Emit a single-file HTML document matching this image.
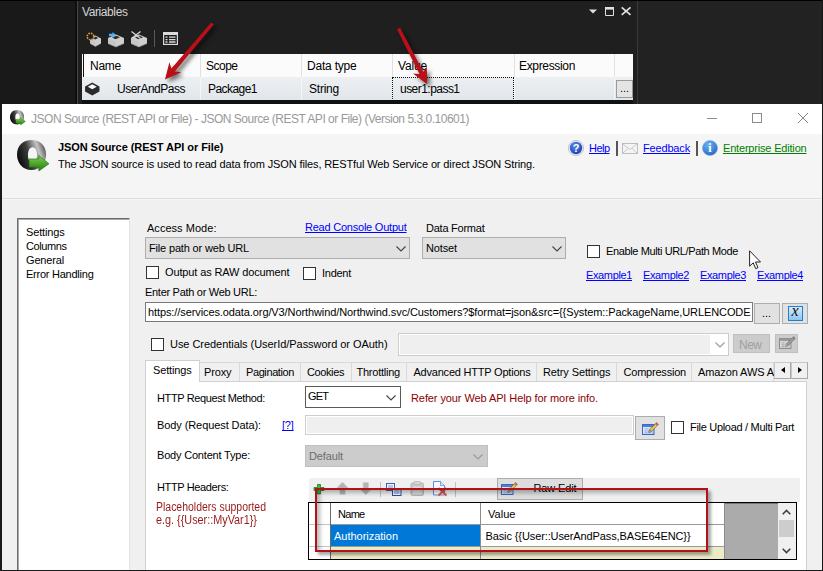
<!DOCTYPE html>
<html><head><meta charset="utf-8"><title>JSON Source</title>
<style>
*{box-sizing:border-box;margin:0;padding:0}
html,body{width:823px;height:571px;overflow:hidden;background:#161616}
body{position:relative;font-family:"Liberation Sans",sans-serif;font-size:11px;color:#000}
.a{position:absolute;white-space:nowrap}
.t{position:absolute;white-space:nowrap;line-height:14px;height:14px}
.lk{color:#0000ff;text-decoration:underline;text-decoration-skip-ink:none}
.cb{position:absolute;width:13px;height:13px;border:1px solid #333;background:#fff}
svg{position:absolute;overflow:visible}
</style></head><body>
<div class="a" style="left:0px;top:0px;width:77px;height:104px;background:#191919"></div>
<div class="a" style="left:75px;top:0px;width:2px;height:104px;background:#0e0e0e"></div>
<div class="a" style="left:77px;top:0px;width:1px;height:104px;background:#454545"></div>
<div class="a" style="left:78px;top:0px;width:560px;height:104px;background:#1f1f20"></div>
<div class="a" style="left:637px;top:0px;width:1px;height:104px;background:#3a3a3c"></div>
<div class="a" style="left:638px;top:0px;width:185px;height:104px;background:#222223"></div>
<div class="a" style="left:0px;top:0px;width:823px;height:1px;background:#000000"></div>
<div class="t" style="left:82px;top:5px;font-size:12px;color:#d4d4d4;letter-spacing:-0.405px">Variables</div>
<svg style="left:588px;top:5px" width="46" height="14" viewBox="588 5 46 14"><path d="M589 9.500h8l-4 4z" fill="#e0e0e0"/><path d="M605.500 7.500h8v8h-8z" fill="none" stroke="#e0e0e0" stroke-width="1"/><rect x="605" y="7" width="9" height="2.600" fill="#e0e0e0"/><path d="M621.700 7.300l8.800 7.600M630.500 7.300l-8.800 7.600" stroke="#e4e4e4" stroke-width="1.600" fill="none"/></svg>
<svg style="left:89.5px;top:34.5px" width="11" height="11.5" viewBox="0 0 16 13" preserveAspectRatio="none"><path d="M0 4L8 .5l8 3.500v5.500L8 13 0 9.500z" fill="#cfcfcf"/><path d="M0 4l8 3.500v5.500L0 9.500z" fill="#c6c6c6"/><path d="M4 3.600L8.500 1.800l3.500 1.500L7.500 5.200z" fill="#2c2c2c"/><path d="M.4 9.700L8 13l7.600-3.300" fill="none" stroke="#8c8c8c" stroke-width=".9" stroke-dasharray="1.500 1"/></svg><svg style="left:85.500px;top:31.500px" width="9" height="9" viewBox="0 0 9 9"><circle cx="4.500" cy="4.500" r="3.300" fill="#1f1f20" stroke="#eaa540" stroke-width="1.500" stroke-dasharray="1.500 1.100"/></svg>
<svg style="left:108px;top:33.5px" width="16" height="13" viewBox="0 0 16 13" preserveAspectRatio="none"><path d="M0 4L8 .5l8 3.500v5.500L8 13 0 9.500z" fill="#cfcfcf"/><path d="M0 4l8 3.500v5.500L0 9.500z" fill="#c6c6c6"/><path d="M4 3.600L8.500 1.800l3.500 1.500L7.500 5.200z" fill="#2c2c2c"/><path d="M.4 9.700L8 13l7.600-3.300" fill="none" stroke="#8c8c8c" stroke-width=".9" stroke-dasharray="1.500 1"/></svg><svg style="left:109px;top:32px" width="7" height="6" viewBox="0 0 7 6"><path d="M0 1.800h3.500V0L7 3 3.500 6V4.200H0z" fill="#4fb2f7"/></svg>
<svg style="left:131px;top:33.5px" width="16" height="13" viewBox="0 0 16 13" preserveAspectRatio="none"><path d="M0 4L8 .5l8 3.500v5.500L8 13 0 9.500z" fill="#cfcfcf"/><path d="M0 4l8 3.500v5.500L0 9.500z" fill="#c6c6c6"/><path d="M4 3.600L8.500 1.800l3.500 1.500L7.500 5.200z" fill="#2c2c2c"/><path d="M.4 9.700L8 13l7.600-3.300" fill="none" stroke="#8c8c8c" stroke-width=".9" stroke-dasharray="1.500 1"/></svg><svg style="left:131px;top:31px" width="10" height="8" viewBox="0 0 10 8"><path d="M.5.500l9 7M9.500.500l-9 7" stroke="#d4d4d4" stroke-width="1.250" fill="none"/></svg>
<div class="a" style="left:154px;top:30px;width:1px;height:17px;background:#5a5a5e"></div>
<svg style="left:163px;top:32px" width="15" height="13" viewBox="0 0 15 13"><rect x="0.6" y="0.6" width="13.8" height="11.8" fill="#1f1f20" stroke="#dadada" stroke-width="1.2"/><rect x="0.6" y="0.6" width="13.8" height="2.4" fill="#dadada"/><path d="M2.5 5.2h2M6 5.2h6.5M2.5 7.6h2M6 7.6h6.5M2.5 10h2M6 10h6.5" stroke="#dadada" stroke-width="1.3"/></svg>
<div class="a" style="left:82px;top:54px;width:551px;height:23px;background:#fbfbfb"></div>
<div class="a" style="left:82px;top:77px;width:551px;height:23px;background:linear-gradient(#edf0f3,#e1e6ea)"></div>
<div class="a" style="left:83px;top:54px;width:1px;height:23px;background:#111"></div>
<div class="a" style="left:82px;top:100px;width:551px;height:4px;background:#111111"></div>
<div class="a" style="left:200px;top:54px;width:1px;height:23px;background:#e0e0e0"></div>
<div class="a" style="left:200px;top:77px;width:1px;height:23px;background:#f4f6f8"></div>
<div class="a" style="left:301px;top:54px;width:1px;height:23px;background:#e0e0e0"></div>
<div class="a" style="left:301px;top:77px;width:1px;height:23px;background:#f4f6f8"></div>
<div class="a" style="left:392px;top:54px;width:1px;height:23px;background:#e0e0e0"></div>
<div class="a" style="left:392px;top:77px;width:1px;height:23px;background:#f4f6f8"></div>
<div class="a" style="left:514px;top:54px;width:1px;height:23px;background:#e0e0e0"></div>
<div class="a" style="left:514px;top:77px;width:1px;height:23px;background:#f4f6f8"></div>
<div class="a" style="left:614px;top:54px;width:1px;height:23px;background:#e0e0e0"></div>
<div class="a" style="left:614px;top:77px;width:1px;height:23px;background:#f4f6f8"></div>
<div class="t" style="left:90px;top:59px;font-size:12px;color:#000000;letter-spacing:-0.254px">Name</div>
<div class="t" style="left:206px;top:59px;font-size:12px;color:#000000;letter-spacing:-0.506px">Scope</div>
<div class="t" style="left:307px;top:59px;font-size:12px;color:#000000;letter-spacing:-0.208px">Data type</div>
<div class="t" style="left:398px;top:59px;font-size:12px;color:#000000;letter-spacing:-0.163px">Value</div>
<div class="t" style="left:519px;top:59px;font-size:12px;color:#000000;letter-spacing:-0.338px">Expression</div>
<div class="t" style="left:117px;top:82px;font-size:12px;color:#000000;letter-spacing:-0.489px">UserAndPass</div>
<div class="t" style="left:208px;top:82px;font-size:12px;color:#000000;letter-spacing:-0.547px">Package1</div>
<div class="t" style="left:309px;top:82px;font-size:12px;color:#000000;letter-spacing:-0.227px">String</div>
<div class="t" style="left:400px;top:82px;font-size:12px;color:#000000;letter-spacing:-0.534px">user1:pass1</div>
<svg style="left:85px;top:82px" width="14.500" height="13.500" viewBox="0 0 16 15"><path d="M0 5L8 0.5 16 5v5.5L8 15 0 10.5z" fill="#2b2b2b"/><path d="M3 5.2L8 2.6l5 2.6L8 8z" fill="#fafafa"/></svg>
<div class="a" style="left:392px;top:77px;width:122px;height:24px;border:1px dotted #111"></div>
<div class="a" style="left:616px;top:80px;width:17px;height:18px;background:#e4e4e4;border:1px solid #9a9a9a"></div>
<div class="t" style="left:620px;top:81px;color:#000">...</div>
<svg style="left:0;top:0;filter:drop-shadow(3px 3px 2px rgba(0,0,0,.55))" width="823" height="110" viewBox="0 0 823 110"><path d="M211.2 22.4 L171.4 68.5 L169.4 62.3 L165.0 79.5 L181.3 72.3 L174.8 71.4 L213.8 24.6Z" fill="#b90f16"/><path d="M396.9 29.3 L419.5 74.1 L412.9 73.5 L427.2 84.2 L426.8 66.4 L423.4 72.1 L400.1 27.7Z" fill="#b90f16"/></svg>
<div class="a" style="left:2px;top:104px;width:820px;height:30px;background:#ffffff"></div>
<div class="a" style="left:2px;top:134px;width:820px;height:436px;background:#f0f0f0"></div>
<div class="t" style="left:31px;top:112px;font-size:12px;color:#999999;letter-spacing:-0.483px">JSON Source (REST API or File) - JSON Source (REST API or File) (Version 5.3.0.10601)</div>
<svg style="left:700px;top:108px" width="115" height="22" viewBox="700 108 115 22"><path d="M707 118.500h10" stroke="#8a8a8a" stroke-width="1"/><rect x="752.5" y="113.5" width="9" height="9" fill="none" stroke="#8a8a8a" stroke-width="1"/><path d="M798 113l10 10M808 113l-10 10" stroke="#8a8a8a" stroke-width="1" fill="none"/></svg>
<svg style="left:10px;top:110px" width="16.0" height="15.5" viewBox="0 0 34 33"><defs><linearGradient id="rg10" x1="0" y1=".6" x2="1" y2=".25"><stop offset="0" stop-color="#0a0a0a"/><stop offset=".4" stop-color="#3c3c3c"/><stop offset=".74" stop-color="#c4c4c4"/><stop offset="1" stop-color="#4a4a4a"/></linearGradient><linearGradient id="gg10" x1="0" y1="0" x2="0" y2="1"><stop offset="0" stop-color="#7fd24a"/><stop offset="1" stop-color="#1f7d12"/></linearGradient></defs><path fill-rule="evenodd" fill="url(#rg10)" d="M15 0C24 0 30 6 30 15S24 31 15 31 0 24 0 15 6 0 15 0zM16 7.500c-3 0-4.700 3.700-4.700 8S13 23.500 16 23.500s4.700-3.700 4.700-8S19 7.500 16 7.500z"/><path fill="url(#gg10)" stroke="#1c6b10" stroke-width=".6" d="M12.500 19.500h10V16l10.500 8.500L22.500 32v-4h-10z"/></svg>
<div class="a" style="left:2px;top:134px;width:820px;height:64px;background:#f5f5f5"></div>
<div class="a" style="left:2px;top:198px;width:820px;height:1px;background:#dcdcdc"></div>
<div class="a" style="left:2px;top:199px;width:820px;height:1px;background:#f7f7f7"></div>
<svg style="left:16.5px;top:139.5px" width="33.0" height="32.0" viewBox="0 0 34 33"><defs><linearGradient id="rg16" x1="0" y1=".6" x2="1" y2=".25"><stop offset="0" stop-color="#0a0a0a"/><stop offset=".4" stop-color="#3c3c3c"/><stop offset=".74" stop-color="#c4c4c4"/><stop offset="1" stop-color="#4a4a4a"/></linearGradient><linearGradient id="gg16" x1="0" y1="0" x2="0" y2="1"><stop offset="0" stop-color="#7fd24a"/><stop offset="1" stop-color="#1f7d12"/></linearGradient></defs><path fill-rule="evenodd" fill="url(#rg16)" d="M15 0C24 0 30 6 30 15S24 31 15 31 0 24 0 15 6 0 15 0zM16 7.500c-3 0-4.700 3.700-4.700 8S13 23.500 16 23.500s4.700-3.700 4.700-8S19 7.500 16 7.500z"/><path fill="url(#gg16)" stroke="#1c6b10" stroke-width=".6" d="M12.500 19.500h10V16l10.500 8.500L22.500 32v-4h-10z"/></svg>
<div class="t" style="left:58px;top:140px;font-weight:bold;letter-spacing:-0.053px">JSON Source (REST API or File)</div>
<div class="t" style="left:58px;top:157px;letter-spacing:-0.130px">The JSON source is used to read data from JSON files, RESTful Web Service or direct JSON String.</div>
<svg style="left:568px;top:140px" width="16" height="16" viewBox="0 0 16 16"><defs><radialGradient id="hb" cx=".4" cy=".3" r=".8"><stop offset="0" stop-color="#5b8be8"/><stop offset="1" stop-color="#1b38a0"/></radialGradient></defs><circle cx="8" cy="8" r="7.6" fill="#e9eef8" stroke="#9aa6c8" stroke-width=".6"/><circle cx="8" cy="8" r="6.2" fill="url(#hb)"/><text x="8" y="12" font-family="Liberation Sans,sans-serif" font-size="11" font-weight="bold" fill="#fff" text-anchor="middle">?</text></svg>
<div class="t lk" style="left:589px;top:141px;letter-spacing:-0.531px">Help</div>
<div class="a" style="left:616px;top:141px;width:2px;height:15px;background:#555"></div>
<svg style="left:622px;top:143px" width="16" height="11" viewBox="0 0 16 11"><rect x=".5" y=".5" width="15" height="10" fill="#f4f4f4" stroke="#bdbdbd"/><path d="M1 1l7 5.500L15 1M1 10l5-4.500M15 10l-5-4.500" fill="none" stroke="#c4c4c4" stroke-width=".9"/></svg>
<div class="t lk" style="left:643px;top:141px;letter-spacing:-0.164px">Feedback</div>
<div class="a" style="left:696px;top:141px;width:2px;height:15px;background:#555"></div>
<svg style="left:702px;top:140px" width="16" height="16" viewBox="0 0 16 16"><defs><radialGradient id="ib" cx=".4" cy=".3" r=".8"><stop offset="0" stop-color="#6fb4f4"/><stop offset="1" stop-color="#1c64c0"/></radialGradient></defs><circle cx="8" cy="8" r="7.6" fill="url(#ib)" stroke="#8fb2dc" stroke-width=".6"/><text x="8" y="12.300" font-family="Liberation Serif,serif" font-size="12" font-weight="bold" fill="#fff" text-anchor="middle">i</text></svg>
<div class="t" style="left:723px;top:141px;color:#008000;letter-spacing:-0.185px;text-decoration:underline;text-decoration-skip-ink:none">Enterprise Edition</div>
<div class="a" style="left:17px;top:218px;width:113px;height:360px;background:#ffffff;border:1px solid #6d6d6d;border-right-color:#e3e3e3"></div>
<div class="a" style="left:18px;top:219px;width:111px;height:1px;background:#a8a8a8"></div>
<div class="a" style="left:18px;top:219px;width:1px;height:355px;background:#a8a8a8"></div>
<div class="t" style="left:26px;top:225px;letter-spacing:-0.156px">Settings</div>
<div class="t" style="left:26px;top:239px;letter-spacing:-0.415px">Columns</div>
<div class="t" style="left:26px;top:253px;letter-spacing:-0.163px">General</div>
<div class="t" style="left:26px;top:267px;letter-spacing:-0.244px">Error Handling</div>
<div class="t" style="left:147px;top:221px;letter-spacing:0.034px">Access Mode:</div>
<div class="t lk" style="left:305px;top:220px;letter-spacing:-0.226px">Read Console Output</div>
<div class="t" style="left:426px;top:221px;letter-spacing:-0.240px">Data Format</div>
<div class="a" style="left:145px;top:237px;width:265px;height:22px;background:#e1e1e1;border:1px solid #adadad"></div>
<div class="t" style="left:149px;top:241px;letter-spacing:-0.166px">File path or web URL</div>
<svg style="left:396px;top:246px" width="10" height="6" viewBox="0 0 10 6"><path d="M.5.500l4.500 4.500 4.500-4.500" fill="none" stroke="#444" stroke-width="1.150"/></svg>
<div class="a" style="left:422px;top:237px;width:144px;height:22px;background:#e1e1e1;border:1px solid #adadad"></div>
<div class="t" style="left:426px;top:241px;letter-spacing:-0.133px">Notset</div>
<svg style="left:552px;top:246px" width="10" height="6" viewBox="0 0 10 6"><path d="M.5.500l4.500 4.500 4.500-4.500" fill="none" stroke="#444" stroke-width="1.150"/></svg>
<div class="cb" style="left:587px;top:245px;width:13px;height:13px"></div>
<div class="t" style="left:606px;top:244px;letter-spacing:-0.379px">Enable Multi URL/Path Mode</div>
<div class="t lk" style="left:586px;top:268px;letter-spacing:-0.365px">Example1</div>
<div class="t lk" style="left:643px;top:268px;letter-spacing:-0.365px">Example2</div>
<div class="t lk" style="left:700px;top:268px;letter-spacing:-0.365px">Example3</div>
<div class="t lk" style="left:757px;top:268px;letter-spacing:-0.365px">Example4</div>
<div class="cb" style="left:146px;top:266px;width:13px;height:13px"></div>
<div class="t" style="left:165px;top:265px;letter-spacing:-0.131px">Output as RAW document</div>
<div class="cb" style="left:303px;top:267px;width:13px;height:13px"></div>
<div class="t" style="left:322px;top:266px;letter-spacing:-0.266px">Indent</div>
<div class="t" style="left:145px;top:285px;letter-spacing:-0.291px">Enter Path or Web URL:</div>
<div class="a" style="left:145px;top:302px;width:608px;height:20px;background:#ffffff;border:1px solid #7a7a7a"></div>
<div class="t" style="left:148px;top:305px;letter-spacing:-0.096px">https://services.odata.org/V3/Northwind/Northwind.svc/Customers?$format=json&amp;src={{System::PackageName,URLENCODE</div>
<div class="a" style="left:754px;top:303px;width:26px;height:21px;background:#e1e1e1;border:1px solid #adadad"></div>
<div class="t" style="left:762px;top:306px">...</div>
<div class="a" style="left:782px;top:303px;width:26px;height:21px;background:#e1e1e1;border:1px solid #adadad"></div>
<div class="a" style="left:788px;top:306px;width:15px;height:15px;background:linear-gradient(#d6ebfb,#8cc6f0);border:1px solid #1e7fd6"></div>
<div class="t" style="left:791.500px;top:304px;font-family:'Liberation Serif',serif;font-style:italic;font-size:16px;color:#111">x</div>
<div class="cb" style="left:151px;top:338px;width:13px;height:13px"></div>
<div class="t" style="left:170px;top:337px;letter-spacing:-0.047px">Use Credentials (UserId/Password or OAuth)</div>
<div class="a" style="left:398px;top:333px;width:331px;height:23px;background:#ffffff;border:1px solid #cdcdcd"></div>
<div class="a" style="left:400px;top:335px;width:310px;height:19px;background:#efefef"></div>
<svg style="left:715px;top:342px" width="10" height="6" viewBox="0 0 10 6"><path d="M.5.500l4.500 4.500 4.500-4.500" fill="none" stroke="#9a9a9a" stroke-width="1.150"/></svg>
<div class="a" style="left:733px;top:334px;width:37px;height:19px;background:#cccccc;border:1px solid #bfbfbf"></div>
<div class="t" style="left:739px;top:338px;font-size:12px;color:#a0a0a0;letter-spacing:-0.505px">New</div>
<div class="a" style="left:775px;top:334px;width:23px;height:19px;background:#cccccc;border:1px solid #bfbfbf"></div>
<svg style="left:778.5px;top:336px" width="17" height="13" viewBox="0 0 17 13"><defs><linearGradient id="eg778" x1="0" y1="0" x2="1" y2="1"><stop offset="0" stop-color="#e4e4e4"/><stop offset="1" stop-color="#c4c4c4"/></linearGradient></defs><rect x=".5" y="2.500" width="11.500" height="10" fill="url(#eg778)" stroke="#8e8e8e"/><rect x=".5" y="2.500" width="11.500" height="2.200" fill="#9a9a9a" stroke="#8e8e8e" stroke-width=".6"/><path d="M2.500 6.800h3M2.500 8.800h3M2.500 10.800h3" stroke="#a8a8a8" stroke-width="1"/><path d="M14.600.600l1.800 1.800-7 7-2.600.9.800-2.700z" fill="#9c9c9c" stroke="#666" stroke-width=".5"/><path d="M14.600.600l1.800 1.800-1.400 1.400-1.800-1.800z" fill="#8a8a8a"/><path d="M6.800 10.300l.8-2.700 1.800 1.800z" fill="#e0e0e0" stroke="#666" stroke-width=".5"/></svg>
<div class="a" style="left:145px;top:381px;width:662px;height:200px;background:#ffffff;border:1px solid #d0d0d0"></div>
<div class="a" style="left:199px;top:362px;width:41px;height:19px;background:#f0f0f0;border:1px solid #d9d9d9;border-bottom:none"></div>
<div class="t" style="left:204px;top:365px;letter-spacing:-0.125px">Proxy</div>
<div class="a" style="left:239px;top:362px;width:62px;height:19px;background:#f0f0f0;border:1px solid #d9d9d9;border-bottom:none"></div>
<div class="t" style="left:246px;top:365px;letter-spacing:-0.400px">Pagination</div>
<div class="a" style="left:300px;top:362px;width:52px;height:19px;background:#f0f0f0;border:1px solid #d9d9d9;border-bottom:none"></div>
<div class="t" style="left:307px;top:365px;letter-spacing:-0.393px">Cookies</div>
<div class="a" style="left:351px;top:362px;width:56px;height:19px;background:#f0f0f0;border:1px solid #d9d9d9;border-bottom:none"></div>
<div class="t" style="left:356.5px;top:365px;letter-spacing:-0.236px">Throttling</div>
<div class="a" style="left:406px;top:362px;width:131px;height:19px;background:#f0f0f0;border:1px solid #d9d9d9;border-bottom:none"></div>
<div class="t" style="left:413.5px;top:365px;letter-spacing:-0.213px">Advanced HTTP Options</div>
<div class="a" style="left:536px;top:362px;width:81px;height:19px;background:#f0f0f0;border:1px solid #d9d9d9;border-bottom:none"></div>
<div class="t" style="left:543px;top:365px;letter-spacing:-0.114px">Retry Settings</div>
<div class="a" style="left:616px;top:362px;width:76px;height:19px;background:#f0f0f0;border:1px solid #d9d9d9;border-bottom:none"></div>
<div class="t" style="left:623.5px;top:365px;letter-spacing:-0.210px">Compression</div>
<div class="a" style="left:691px;top:362px;width:83px;height:19px;background:#f0f0f0;border:1px solid #d9d9d9;border-bottom:none;overflow:hidden"></div>
<div class="a" style="left:691px;top:362px;width:83px;height:19px;overflow:hidden"><div class="t" style="left:7px;top:3px;letter-spacing:-0.1px">Amazon AWS API</div></div>
<div class="a" style="left:145px;top:360px;width:55px;height:22px;background:#ffffff;border:1px solid #d0d0d0;border-bottom:none"></div>
<div class="t" style="left:153px;top:363px;letter-spacing:-0.156px">Settings</div>
<div class="a" style="left:774px;top:362px;width:34px;height:18px;background:#f0f0f0"></div>
<div class="a" style="left:774px;top:362px;width:17px;height:17px;background:#f0f0f0;border:1px solid #a8a8a8;border-top-color:#c8c8c8;border-left-color:#c8c8c8"></div>
<svg style="left:780.5px;top:366.500px" width="4" height="6" viewBox="0 0 4 6"><path d="M4 0v6L0 3z" fill="#000"/></svg>
<div class="a" style="left:791px;top:362px;width:17px;height:17px;background:#f0f0f0;border:1px solid #a8a8a8;border-top-color:#c8c8c8;border-left-color:#c8c8c8"></div>
<svg style="left:798px;top:366.500px" width="4" height="6" viewBox="0 0 4 6"><path d="M0 0v6l4-3z" fill="#000"/></svg>
<div class="t" style="left:157px;top:391px;letter-spacing:-0.368px">HTTP Request Method:</div>
<div class="a" style="left:305px;top:386px;width:96px;height:22px;background:#ffffff;border:1px solid #5a5a5a"></div>
<div class="t" style="left:308px;top:389px;letter-spacing:-0.875px">GET</div>
<svg style="left:386px;top:395px" width="10" height="6" viewBox="0 0 10 6"><path d="M.5.500l4.500 4.500 4.500-4.500" fill="none" stroke="#444" stroke-width="1.150"/></svg>
<div class="t" style="left:411px;top:391px;color:#8b0000;letter-spacing:-0.093px">Refer your Web API Help for more info.</div>
<div class="t" style="left:157px;top:418px;letter-spacing:-0.089px">Body (Request Data):</div>
<div class="t lk" style="left:282px;top:418px;letter-spacing:-0.245px">[?]</div>
<div class="a" style="left:305px;top:415px;width:329px;height:20px;background:#ffffff;border:1px solid #cdcdcd"></div>
<div class="a" style="left:307px;top:417px;width:325px;height:16px;background:#efefef"></div>
<div class="a" style="left:635px;top:416px;width:30px;height:24px;background:#e1e1e1;border:1px solid #adadad"></div>
<svg style="left:642px;top:421.5px" width="17" height="13" viewBox="0 0 17 13"><defs><linearGradient id="eg642" x1="0" y1="0" x2="1" y2="1"><stop offset="0" stop-color="#f2f7ff"/><stop offset="1" stop-color="#a9c4f0"/></linearGradient></defs><rect x=".5" y="2.500" width="11.500" height="10" fill="url(#eg642)" stroke="#3f66b8"/><rect x=".5" y="2.500" width="11.500" height="2.200" fill="#4a7be0" stroke="#3f66b8" stroke-width=".6"/><path d="M2.500 6.800h3M2.500 8.800h3M2.500 10.800h3" stroke="#8fb0ea" stroke-width="1"/><path d="M14.600.600l1.800 1.800-7 7-2.600.9.800-2.700z" fill="#f0c84a" stroke="#333" stroke-width=".5"/><path d="M14.600.600l1.800 1.800-1.400 1.400-1.800-1.800z" fill="#d8604a"/><path d="M6.800 10.300l.8-2.700 1.800 1.800z" fill="#ffffff" stroke="#333" stroke-width=".5"/></svg>
<div class="cb" style="left:671px;top:421px;width:13px;height:13px"></div>
<div class="t" style="left:690px;top:420px;letter-spacing:-0.303px">File Upload / Multi Part</div>
<div class="t" style="left:157px;top:448px;letter-spacing:-0.190px">Body Content Type:</div>
<div class="a" style="left:305px;top:445px;width:183px;height:22px;background:#cccccc;border:1px solid #bfbfbf"></div>
<div class="t" style="left:309px;top:449px;color:#6d6d6d;letter-spacing:-0.123px">Default</div>
<svg style="left:473px;top:454px" width="10" height="6" viewBox="0 0 10 6"><path d="M.5.500l4.500 4.500 4.500-4.500" fill="none" stroke="#9a9a9a" stroke-width="1.150"/></svg>
<div class="t" style="left:157px;top:480px;letter-spacing:-0.363px">HTTP Headers:</div>
<div class="t" style="left:156px;top:500px;font-size:12px;color:#981a1a;transform-origin:0 0;transform:scaleX(0.8724)">Placeholders supported</div>
<div class="t" style="left:156px;top:513px;font-size:12px;color:#981a1a;transform-origin:0 0;transform:scaleX(0.9030)">e.g. {{User::MyVar1}}</div>
<div class="a" style="left:309px;top:478px;width:491px;height:24px;background:#f0f0f0;border-radius:3px 0 0 0"></div>
<div class="a" style="left:497px;top:478px;width:86px;height:22px;background:#dddddd;border:1px solid #adadad"></div>
<svg style="left:500.5px;top:481.5px" width="17" height="13" viewBox="0 0 17 13"><defs><linearGradient id="eg500" x1="0" y1="0" x2="1" y2="1"><stop offset="0" stop-color="#f2f7ff"/><stop offset="1" stop-color="#a9c4f0"/></linearGradient></defs><rect x=".5" y="2.500" width="11.500" height="10" fill="url(#eg500)" stroke="#3f66b8"/><rect x=".5" y="2.500" width="11.500" height="2.200" fill="#4a7be0" stroke="#3f66b8" stroke-width=".6"/><path d="M2.500 6.800h3M2.500 8.800h3M2.500 10.800h3" stroke="#8fb0ea" stroke-width="1"/><path d="M14.600.600l1.800 1.800-7 7-2.600.9.800-2.700z" fill="#f0c84a" stroke="#333" stroke-width=".5"/><path d="M14.600.600l1.800 1.800-1.400 1.400-1.800-1.800z" fill="#d8604a"/><path d="M6.800 10.300l.8-2.700 1.800 1.800z" fill="#ffffff" stroke="#333" stroke-width=".5"/></svg>
<div class="t" style="left:533.5px;top:481px;letter-spacing:-0.129px">Raw Edit</div>
<div class="a" style="left:380px;top:482px;width:1px;height:15px;background:#c0c0c0"></div>
<div class="a" style="left:455px;top:482px;width:1px;height:15px;background:#c0c0c0"></div>
<svg style="left:313px;top:481px" width="140" height="16" viewBox="313 481 140 16"><path d="M317.500 484.500h3v3h3.500v3h-3.500v3.500h-3v-3.500H314v-3h3.500z" fill="#35c035" stroke="#1d7a1d" stroke-width=".8"/><path d="M342.500 482l6.300 6.500h-3.600v6h-5.400v-6h-3.600z" fill="#b4b4b4" stroke="#cfcfcf" stroke-width=".6"/><path d="M365.800 495l6.300-6.500h-3.600v-6h-5.400v6h-3.600z" fill="#b4b4b4" stroke="#cfcfcf" stroke-width=".6"/><rect x="386.500" y="483.500" width="8" height="7" fill="#eef4ff" stroke="#3d62b0"/><path d="M388 486h5M388 488h5" stroke="#5a82d0" stroke-width=".8"/><rect x="392.500" y="488.500" width="8.500" height="7" fill="#f4f8ff" stroke="#2d4f98"/><path d="M394 491h5.500M394 493h5.500" stroke="#4a72c4" stroke-width=".9"/><rect x="411" y="483" width="12.500" height="12.500" rx="1.500" fill="#c9c9c9" stroke="#b5b5b5"/><rect x="414" y="481.500" width="6.500" height="3" rx="1" fill="#d8d8d8" stroke="#b0b0b0" stroke-width=".7"/><rect x="413" y="486.500" width="8.500" height="7.500" fill="#dcdcdc"/><path d="M433.500 481.500h7l4 4v9.500h-11z" fill="#f6faff" stroke="#5f8fd8"/><path d="M440.500 481.500v4h4" fill="#d6e6fa" stroke="#5f8fd8" stroke-width=".8"/><path d="M438.500 488l8 7.500M446.500 488l-8 7.500" stroke="#d9534a" stroke-width="2" fill="none"/></svg>
<div class="a" style="left:308px;top:502px;width:489px;height:58px;background:#ababab;border:1px solid #000"></div>
<div class="a" style="left:309px;top:503px;width:487px;height:1px;background:#777"></div>
<div class="a" style="left:309px;top:503px;width:416px;height:21px;background:#ffffff"></div>
<div class="a" style="left:309px;top:524px;width:416px;height:22px;background:#ffffff"></div>
<div class="a" style="left:309px;top:546px;width:22px;height:13px;background:#ffffff"></div>
<div class="a" style="left:331px;top:546px;width:394px;height:13px;background:#ecebc8"></div>
<div class="a" style="left:331px;top:525px;width:149px;height:21px;background:#0078d7"></div>
<div class="a" style="left:309px;top:524px;width:22px;height:1px;background:#c4c4c4"></div>
<div class="a" style="left:331px;top:524px;width:394px;height:1px;background:#9a9a9a"></div>
<div class="a" style="left:309px;top:546px;width:22px;height:1px;background:#c4c4c4"></div>
<div class="a" style="left:331px;top:546px;width:394px;height:1px;background:#9a9a9a"></div>
<div class="a" style="left:330px;top:503px;width:1px;height:56px;background:#6a6a6a"></div>
<div class="a" style="left:480px;top:503px;width:1px;height:56px;background:#8c8c8c"></div>
<div class="a" style="left:724px;top:503px;width:1px;height:56px;background:#8c8c8c"></div>
<div class="t" style="left:338px;top:507px;letter-spacing:-0.711px">Name</div>
<div class="t" style="left:488px;top:507px;letter-spacing:0.034px">Value</div>
<div class="t" style="left:334px;top:529px;color:#ffffff;letter-spacing:-0.017px">Authorization</div>
<div class="t" style="left:485.5px;top:529px;letter-spacing:-0.111px">Basic {{User::UserAndPass,BASE64ENC}}</div>
<div class="a" style="left:778px;top:503px;width:18px;height:56px;background:#f0f0f0"></div>
<div class="a" style="left:779px;top:520px;width:15px;height:17px;background:#cdcdcd"></div>
<svg style="left:782px;top:509px" width="9" height="6" viewBox="0 0 9 6"><path d="M.7 5.300L4.500 1.500l3.800 3.800" fill="none" stroke="#404040" stroke-width="1.600"/></svg>
<svg style="left:782px;top:548px" width="9" height="6" viewBox="0 0 9 6"><path d="M.7.700L4.500 4.500 8.300.7" fill="none" stroke="#404040" stroke-width="1.600"/></svg>
<div class="a" style="left:315px;top:488px;width:393px;height:64px;border:2.500px solid #b01218;box-shadow:3px 3px 3px rgba(0,0,0,.35), inset 4px 4px 4px -1px rgba(0,0,0,.28)"></div>
<svg style="left:749px;top:250px" width="13" height="20" viewBox="0 0 13 20"><path d="M.6.8v15.400l3.600-3.400 2.500 5.800 2.300-1-2.500-5.600h5z" fill="#fff" stroke="#222" stroke-width="1" stroke-linejoin="round"/></svg>
<div class="a" style="left:0px;top:104px;width:2px;height:467px;background:#1a1a1a"></div>
<div class="a" style="left:822px;top:0px;width:1px;height:571px;background:#151515"></div>
<div class="a" style="left:0px;top:570px;width:823px;height:1px;background:#1a1a1a"></div>
</body></html>
